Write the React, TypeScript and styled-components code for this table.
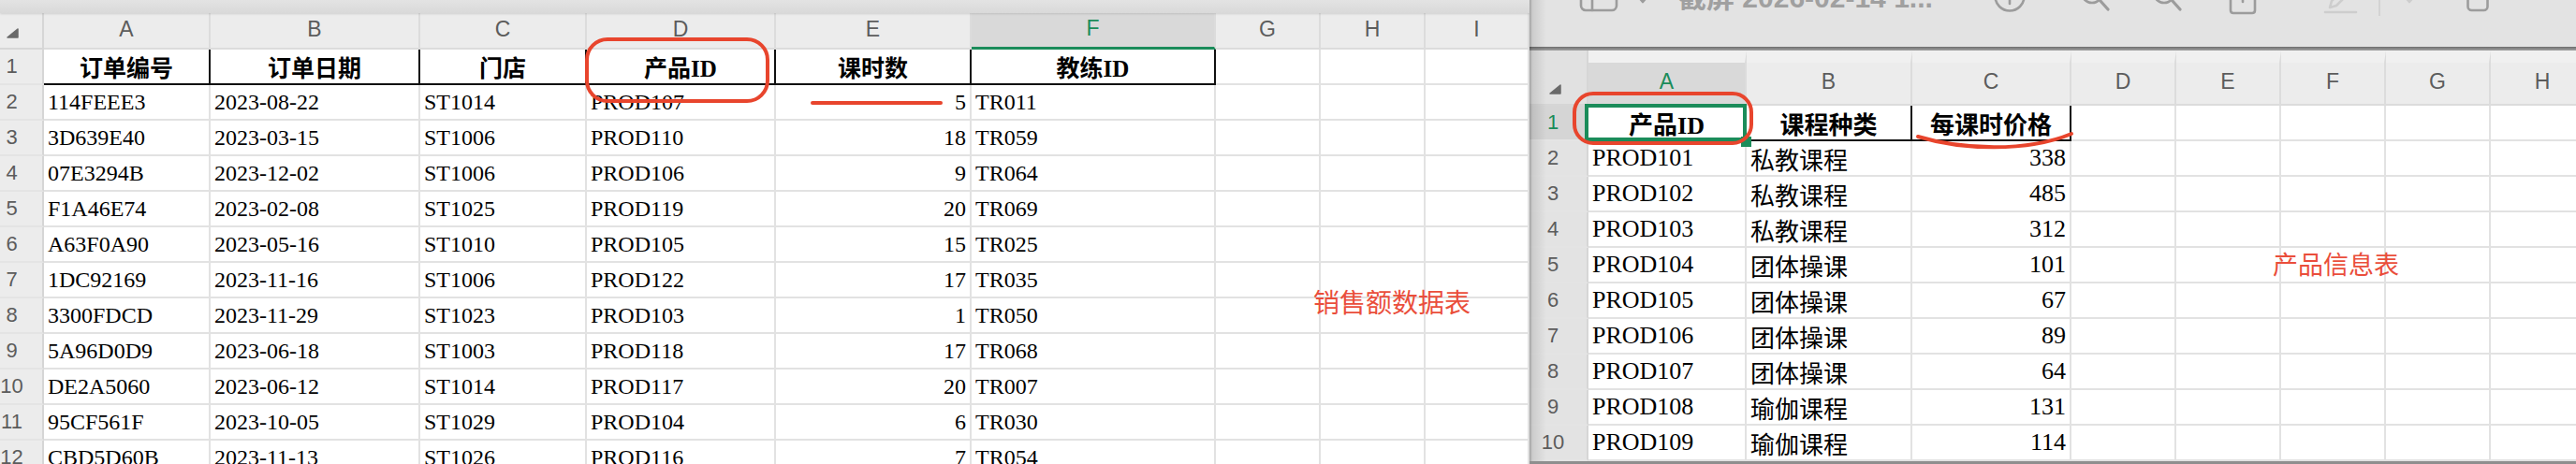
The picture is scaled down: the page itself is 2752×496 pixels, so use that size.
import React from 'react';
import styled, { createGlobalStyle } from 'styled-components';

const SERIF = `"Liberation Serif", "Noto Sans CJK SC", serif`;
const SANS = `"Liberation Sans", "Noto Sans CJK SC", Arial, sans-serif`;
const GREEN = '#1b8c5a';
const RED = '#e8452d';

const GlobalStyle = createGlobalStyle`
  *, *::before, *::after { box-sizing: border-box; }
  html, body { margin: 0; padding: 0; background: #fff; overflow: hidden; }
`;

const Stage = styled.main`
  position: relative;
  display: flex;
  width: 2752px;
  height: 496px;
  overflow: hidden;
  background: #fff;
`;

/* ---------- spreadsheet parts ---------- */

const LeftPane = styled.section`
  flex: none;
  width: 1634px;
  display: flex;
  flex-direction: column;
  overflow: hidden;
`;

const TopStrip = styled.div`
  flex: none;
  height: 14px;
  background: linear-gradient(#e3e3e3, #d9d9d9);
  box-shadow: 0 1px 2px rgba(0, 0, 0, 0.12);
  position: relative;
  z-index: 1;
`;

const Sheet = styled.div<{ $cols: number[]; $head: number }>`
  display: grid;
  grid-template-columns: ${(p) => p.$cols.map((c) => `${c}px`).join(' ')};
  grid-template-rows: ${(p) => p.$head}px;
  grid-auto-rows: 38px;
`;

const Corner = styled.div<{ $x: number; $y: number; $bg: string }>`
  padding: ${(p) => `${p.$y}px 0 0 ${p.$x}px`};
  background: ${(p) => p.$bg};
  border-right: 2px solid #d6d6d6;
  border-bottom: 2px solid #d6d6d6;
`;

const ColHead = styled.div<{ $active?: boolean; $bar?: boolean; $top?: number }>`
  display: flex;
  align-items: center;
  justify-content: center;
  padding-bottom: 3px;
  font-family: ${SANS};
  font-size: 23px;
  color: ${(p) => (p.$active ? GREEN : '#5c5c5c')};
  background: ${(p) => (p.$active ? '#d9d9d9' : '#ececec')};
  border-right: 2px solid #dcdcdc;
  border-bottom: ${(p) => (p.$bar ? `3px solid ${GREEN}` : '2px solid #dcdcdc')};
  border-top: ${(p) => (p.$top ? `${p.$top}px solid #f0f0f0` : '0')};
`;

const RowHead = styled.div<{ $active?: boolean; $pr: number; $bg: string }>`
  display: flex;
  align-items: center;
  justify-content: center;
  padding-right: ${(p) => p.$pr}px;
  font-family: ${SANS};
  font-size: 22px;
  color: ${(p) => (p.$active ? GREEN : '#5c5c5c')};
  background: ${(p) => (p.$active ? '#d5d5d5' : p.$bg)};
  border-right: 2px solid #d6d6d6;
  border-bottom: 2px solid #e4e4e4;
`;

type Align = 'left' | 'right' | 'center';

const Cell = styled.div<{ $align: Align; $head?: boolean; $size: number; $selected?: boolean }>`
  position: relative;
  display: flex;
  align-items: center;
  justify-content: ${(p) =>
    p.$align === 'right' ? 'flex-end' : p.$align === 'center' ? 'center' : 'flex-start'};
  padding: 0 4px;
  font-family: ${SERIF};
  font-size: ${(p) => p.$size}px;
  font-weight: ${(p) => (p.$head ? 700 : 400)};
  color: #000;
  white-space: nowrap;
  background: #fff;
  border-right: 2px solid ${(p) => (p.$head ? '#111' : '#e2e2e2')};
  border-bottom: 2px solid ${(p) => (p.$head ? '#111' : '#e2e2e2')};

  ${(p) =>
    p.$selected &&
    `
    &::after {
      content: '';
      position: absolute;
      left: -4px;
      top: -2px;
      right: -2px;
      bottom: -2px;
      border: 4px solid ${GREEN};
    }
    &::before {
      content: '';
      position: absolute;
      right: -7px;
      bottom: -8px;
      width: 11px;
      height: 11px;
      background: ${GREEN};
      z-index: 1;
    }
  `}
`;

/* ---------- preview window ---------- */

const Window = styled.section`
  position: relative;
  flex: 1;
  min-width: 0;
  display: flex;
  flex-direction: column;
  background: #f0f0f0;
  overflow: hidden;
  border-bottom: 3px solid #8e8e8e;

  &::before {
    content: '';
    position: absolute;
    left: 0;
    top: 0;
    bottom: 0;
    width: 18px;
    background: linear-gradient(
      to right,
      rgba(0, 0, 0, 0.3),
      rgba(0, 0, 0, 0.1) 3px,
      rgba(0, 0, 0, 0)
    );
    z-index: 3;
    pointer-events: none;
  }
`;

const Toolbar = styled.header`
  flex: none;
  height: 50px;
  background: #e3e3e3;
  overflow: hidden;
`;

const ToolRow = styled.div`
  display: flex;
  align-items: flex-start;
  margin-top: -28px;
`;

const Tool = styled.div<{ $gap: number; $w: number }>`
  flex: none;
  margin-left: ${(p) => p.$gap}px;
  width: ${(p) => p.$w}px;
  height: 40px;
  svg {
    display: block;
    overflow: visible;
  }
`;

const Title = styled.div<{ $gap: number }>`
  flex: none;
  width: 300px;
  margin-left: ${(p) => p.$gap}px;
  margin-top: 11px;
  font-family: ${SANS};
  font-weight: 700;
  font-size: 30px;
  line-height: 30px;
  color: #a0a0a0;
  white-space: nowrap;
`;

const Rule = styled.div`
  flex: none;
  height: 4px;
  background: linear-gradient(#6d6d6d, #a2a2a2);
`;

/* ---------- annotations ---------- */

const Marks = styled.svg`
  position: absolute;
  left: 0;
  top: 0;
  pointer-events: none;
  z-index: 5;
`;

const Note = styled.span<{ $x: number; $y: number; $size: number }>`
  position: absolute;
  left: ${(p) => p.$x}px;
  top: ${(p) => p.$y}px;
  font-family: "Noto Sans CJK SC", sans-serif;
  font-size: ${(p) => p.$size}px;
  line-height: 1;
  color: #ea4e3b;
  white-space: nowrap;
  z-index: 4;
`;

/* ---------- data ---------- */

type Col = { id: string; w: number; align: Align };

const leftCols: Col[] = [
  { id: 'A', w: 178, align: 'left' },
  { id: 'B', w: 224, align: 'left' },
  { id: 'C', w: 178, align: 'left' },
  { id: 'D', w: 202, align: 'left' },
  { id: 'E', w: 209, align: 'right' },
  { id: 'F', w: 261, align: 'left' },
  { id: 'G', w: 112, align: 'left' },
  { id: 'H', w: 112, align: 'left' },
  { id: 'I', w: 111, align: 'left' },
];

const leftHead = ['订单编号', '订单日期', '门店', '产品ID', '课时数', '教练ID'];

const leftRows = [
  ['114FEEE3', '2023-08-22', 'ST1014', 'PROD107', '5', 'TR011'],
  ['3D639E40', '2023-03-15', 'ST1006', 'PROD110', '18', 'TR059'],
  ['07E3294B', '2023-12-02', 'ST1006', 'PROD106', '9', 'TR064'],
  ['F1A46E74', '2023-02-08', 'ST1025', 'PROD119', '20', 'TR069'],
  ['A63F0A90', '2023-05-16', 'ST1010', 'PROD105', '15', 'TR025'],
  ['1DC92169', '2023-11-16', 'ST1006', 'PROD122', '17', 'TR035'],
  ['3300FDCD', '2023-11-29', 'ST1023', 'PROD103', '1', 'TR050'],
  ['5A96D0D9', '2023-06-18', 'ST1003', 'PROD118', '17', 'TR068'],
  ['DE2A5060', '2023-06-12', 'ST1014', 'PROD117', '20', 'TR007'],
  ['95CF561F', '2023-10-05', 'ST1029', 'PROD104', '6', 'TR030'],
  ['CBD5D60B', '2023-11-13', 'ST1026', 'PROD116', '7', 'TR054'],
];

const rightCols: Col[] = [
  { id: 'A', w: 169, align: 'left' },
  { id: 'B', w: 177, align: 'left' },
  { id: 'C', w: 170, align: 'right' },
  { id: 'D', w: 112, align: 'left' },
  { id: 'E', w: 112, align: 'left' },
  { id: 'F', w: 112, align: 'left' },
  { id: 'G', w: 112, align: 'left' },
  { id: 'H', w: 112, align: 'left' },
];

const rightHead = ['产品ID', '课程种类', '每课时价格'];

const rightRows = [
  ['PROD101', '私教课程', '338'],
  ['PROD102', '私教课程', '485'],
  ['PROD103', '私教课程', '312'],
  ['PROD104', '团体操课', '101'],
  ['PROD105', '团体操课', '67'],
  ['PROD106', '团体操课', '89'],
  ['PROD107', '团体操课', '64'],
  ['PROD108', '瑜伽课程', '131'],
  ['PROD109', '瑜伽课程', '114'],
];

/* ---------- icons ---------- */

function CornerMark() {
  return (
    <svg width="13" height="11" viewBox="0 0 13 11">
      <path d="M12 1 L12 10 L1 10 Z" fill="#6a6a6a" stroke="#6a6a6a" strokeWidth="1.5" strokeLinejoin="round" />
    </svg>
  );
}

const ICON = '#9c9c9c';
const FAINT = '#cdcdcd';

function ToolIcon({ w, children }: { w: number; children: React.ReactNode }) {
  return (
    <svg width={w} height="40" viewBox={`0 -28 ${w} 40`} fill="none" strokeWidth="2.6" strokeLinecap="round" strokeLinejoin="round">
      {children}
    </svg>
  );
}

/* ---------- app ---------- */

export default function App() {
  return (
    <Stage>
      <GlobalStyle />

      <LeftPane>
        <TopStrip />
        <Sheet $cols={[47, ...leftCols.map((c) => c.w)]} $head={39}>
          <Corner $x={7} $y={13} $bg="#ececec">
            <CornerMark />
          </Corner>
          {leftCols.map((c) => (
            <ColHead key={c.id} $active={c.id === 'F'} $bar={c.id === 'F'}>
              {c.id}
            </ColHead>
          ))}

          <RowHead $pr={20} $bg="#ececec">1</RowHead>
          {leftCols.map((c, i) => (
            <Cell key={c.id} $head={i < 6} $align="center" $size={25}>
              {leftHead[i] ?? ''}
            </Cell>
          ))}

          {leftRows.map((row, ri) => (
            <React.Fragment key={ri}>
              <RowHead $pr={20} $bg="#ececec">{ri + 2}</RowHead>
              {leftCols.map((c, ci) => (
                <Cell key={c.id} $align={c.align} $size={24}>
                  {row[ci] ?? ''}
                </Cell>
              ))}
            </React.Fragment>
          ))}
        </Sheet>
      </LeftPane>

      <Window>
        <Toolbar>
          <ToolRow>
            <Tool $gap={54} $w={40}>
              <ToolIcon w={40}>
                <rect x="1" y="-18" width="38" height="29" rx="5" stroke={ICON} />
                <line x1="13" y1="-18" x2="13" y2="11" stroke={ICON} />
              </ToolIcon>
            </Tool>
            <Tool $gap={20} $w={14}>
              <ToolIcon w={14}>
                <polyline points="2,-4 7,2 12,-4" stroke={ICON} />
              </ToolIcon>
            </Tool>
            <Title $gap={31}>截屏 2026-02-14 1...</Title>
            <Tool $gap={37} $w={34}>
              <ToolIcon w={34}>
                <circle cx="17" cy="-4" r="15.5" stroke={ICON} />
                <line x1="17" y1="-6" x2="17" y2="4" stroke={ICON} />
              </ToolIcon>
            </Tool>
            <Tool $gap={59} $w={32}>
              <ToolIcon w={32}>
                <circle cx="12" cy="-8" r="11" stroke={ICON} />
                <line x1="20" y1="0" x2="29" y2="10" stroke={ICON} strokeWidth="3.2" />
              </ToolIcon>
            </Tool>
            <Tool $gap={45} $w={32}>
              <ToolIcon w={32}>
                <circle cx="12" cy="-8" r="11" stroke={ICON} />
                <line x1="20" y1="0" x2="29" y2="10" stroke={ICON} strokeWidth="3.2" />
              </ToolIcon>
            </Tool>
            <Tool $gap={49} $w={30}>
              <ToolIcon w={30}>
                <path d="M9 -9 H5 Q2 -9 2 -6 V11 Q2 14 5 14 H25 Q28 14 28 11 V-6 Q28 -9 25 -9 H21" stroke={ICON} />
                <line x1="15" y1="-24" x2="15" y2="2" stroke={ICON} />
              </ToolIcon>
            </Tool>
            <Tool $gap={72} $w={35}>
              <ToolIcon w={35}>
                <path d="M6 8 L8 1 L20 -11 L25 -6 L13 6 Z" stroke={FAINT} />
                <line x1="1" y1="13" x2="34" y2="13" stroke={FAINT} />
              </ToolIcon>
            </Tool>
            <Tool $gap={23} $w={2}>
              <ToolIcon w={2}>
                <line x1="1" y1="-28" x2="1" y2="17" stroke="#d3d3d3" strokeWidth="2" strokeLinecap="butt" />
              </ToolIcon>
            </Tool>
            <Tool $gap={24} $w={14}>
              <ToolIcon w={14}>
                <polyline points="2,-4 7,2 12,-4" stroke={FAINT} />
              </ToolIcon>
            </Tool>
            <Tool $gap={54} $w={24}>
              <ToolIcon w={24}>
                <rect x="1.5" y="-12" width="21" height="23" rx="4" stroke={ICON} />
              </ToolIcon>
            </Tool>
          </ToolRow>
        </Toolbar>
        <Rule />

        <Sheet $cols={[63, ...rightCols.map((c) => c.w)]} $head={59}>
          <Corner $x={21} $y={33} $bg="#e1e1e1">
            <CornerMark />
          </Corner>
          {rightCols.map((c) => (
            <ColHead key={c.id} $active={c.id === 'A'} $top={13}>
              {c.id}
            </ColHead>
          ))}

          <RowHead $pr={11} $bg="#e3e3e3" $active>1</RowHead>
          {rightCols.map((c, i) => (
            <Cell key={c.id} $head={i < 3} $align="center" $size={26} $selected={i === 0}>
              {rightHead[i] ?? ''}
            </Cell>
          ))}

          {rightRows.map((row, ri) => (
            <React.Fragment key={ri}>
              <RowHead $pr={11} $bg="#e3e3e3">{ri + 2}</RowHead>
              {rightCols.map((c, ci) => (
                <Cell key={c.id} $align={c.align} $size={26}>
                  {row[ci] ?? ''}
                </Cell>
              ))}
            </React.Fragment>
          ))}
        </Sheet>
      </Window>

      <Note $x={1403} $y={308} $size={28}>销售额数据表</Note>
      <Note $x={2428} $y={268} $size={27}>产品信息表</Note>

      <Marks width="2752" height="496" viewBox="0 0 2752 496" fill="none" stroke={RED} strokeWidth="4" strokeLinecap="round">
        <rect x="627" y="42" width="193" height="66" rx="22" />
        <line x1="868" y1="110" x2="1005" y2="110" />
        <rect x="1682" y="100" width="189" height="53" rx="20" />
        <path d="M2049 146 C2095 160 2165 163 2213 143" />
      </Marks>
    </Stage>
  );
}
